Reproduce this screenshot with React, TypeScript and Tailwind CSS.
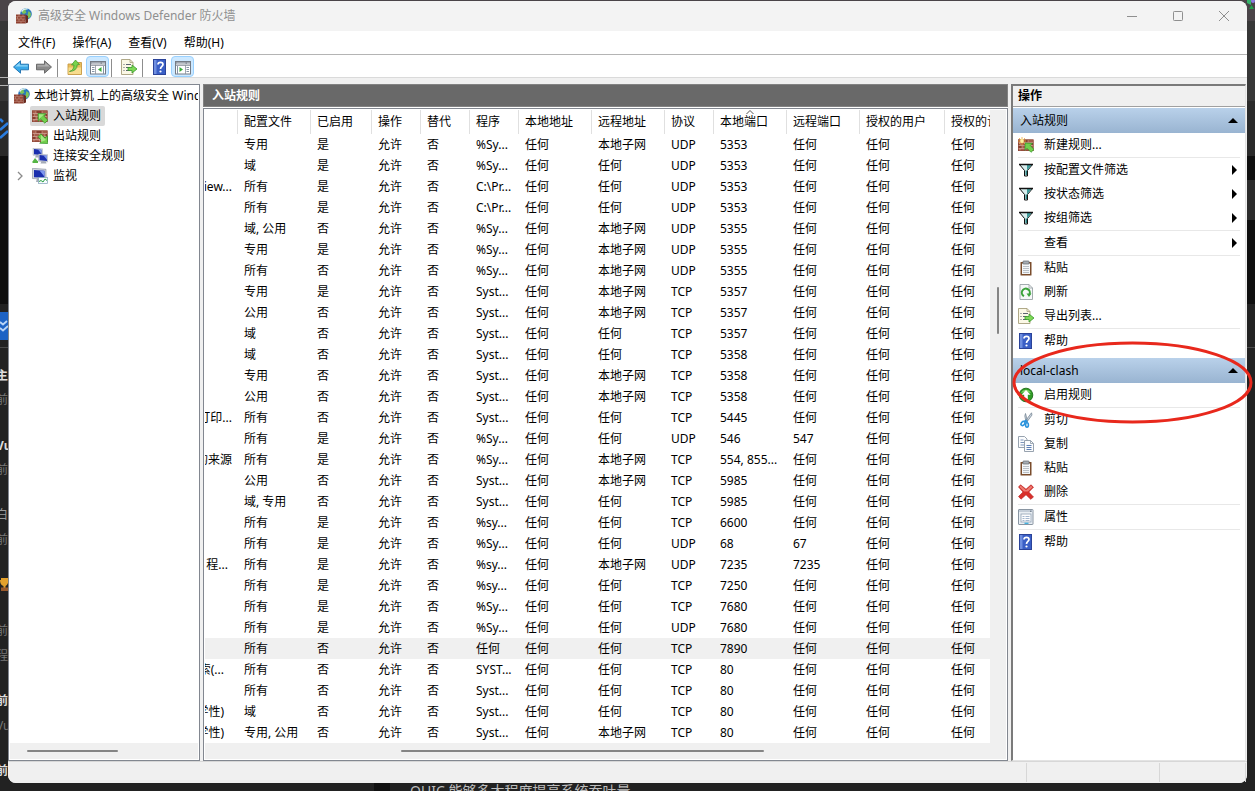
import React from 'react';
import { clsx } from 'clsx';

type IconName =
  | 'firewall'
  | 'inbound'
  | 'outbound'
  | 'connection'
  | 'monitor'
  | 'newRule'
  | 'filter'
  | 'paste'
  | 'refresh'
  | 'export'
  | 'help'
  | 'enable'
  | 'cut'
  | 'copy'
  | 'delete'
  | 'properties'
  | 'back'
  | 'forward'
  | 'folderUp'
  | 'paneLeft'
  | 'paneRight';

const Bricks = () => (
  <>
    <rect x="0" y="2.500" width="15.500" height="11.500" fill="#a85e4c" />
    <path d="M0 5.500h15.500M0 8.500h15.500M0 11.500h15.500M4 2.500v3M10 2.500v3M2 5.500v3M7.500 5.500v3M13 5.500v3M4 8.500v3M10 8.500v3M2 11.500v2.500M7.500 11.500v2.500" stroke="#d9b3a6" strokeWidth="0.600" />
    <path d="M4.500 3h5v2h-5zM0.500 6h1.200v2H.5zM0.500 9h3v2h-3zM13.500 6h1.500v2h-1.500z" fill="#87402f" />
    <rect x="0.300" y="2.800" width="14.900" height="10.900" fill="none" stroke="#8a4435" strokeWidth="0.600" />
  </>
);

const Monitor = ({ x, y }: { x: number; y: number }) => (
  <g transform={`translate(${x} ${y})`}>
    <path d="M3 7h4l1 2.500H2z" fill="#a6acb8" />
    <path d="M0 0l9.500 .8v7L0 7.200z" fill="#d3d8e2" stroke="#9097a8" strokeWidth="0.400" />
    <path d="M1 1l7.500.7v5.200L1 6.300z" fill="#1a2fae" />
    <path d="M5 1.400l3.500.3v4z" fill="#7d98ee" />
  </g>
);

const icons: Record<IconName, React.ReactNode> = {
  firewall: (
    <>
      <circle cx="10" cy="6" r="5.800" fill="#2b78bd" />
      <path d="M6 3c1-1.800 3-2.300 4.500-2.200L9.500 3l1 1.500L8 6 6 5zM12.500 3l2.300 2v3l-2 2.500-1.500-2.500z" fill="#7cc45a" />
      <path d="M5.500 3.500Q8 .2 11.500 1" stroke="#dff1fd" strokeWidth="1.300" fill="none" />
      <path d="M0 6.500h9.500v9H0z" fill="#8f4030" />
      <path d="M0 8.700h9.500M0 11h9.500M0 13.300h9.500M3 6.500v2.200M7 6.500v2.200M5 8.700V11M1.500 8.700V11M3 11v2.300M7 11v2.300M5 13.300v2.200" stroke="#cfa193" strokeWidth="0.500" />
      <path d="M9.500 6.500L12 8v6.500l-2.500 1z" fill="#6b2a1f" />
    </>
  ),
  inbound: (
    <>
      <Bricks />
      <path d="M6 5.500l8 .3-2.200 2.200 4 4.200-3 3-4.200-4.200-2.300 2.200z" fill="#72cf4c" stroke="#2f8f25" strokeWidth="0.700" />
      <path d="M7 6.300l5 .2-5 4.500z" fill="#a5e886" />
    </>
  ),
  outbound: (
    <>
      <Bricks />
      <path d="M15.700 15.500l-8-.3 2.200-2.200-4-4.200 3-3L13 10l2.400-2.200z" fill="#72cf4c" stroke="#2f8f25" strokeWidth="0.700" />
      <path d="M9 7l5 5-5 2z" fill="#a5e886" />
    </>
  ),
  connection: (
    <>
      <Monitor x={1} y={0} />
      <Monitor x={6.500} y={6} />
      <path d="M0.500 13.500l2.500-3.500 3 3.500zM0.500 13h5.500v2H.5z" fill="#55b545" />
    </>
  ),
  monitor: (
    <>
      <path d="M5 10h5l1 4H4z" fill="#a6acb8" />
      <path d="M.500 .3l13.500 1v10L.5 10.500z" fill="#d0d5df" stroke="#858c9a" strokeWidth="0.600" />
      <path d="M2 2l10.500.8v7L2 9.200z" fill="#1a2fae" />
      <path d="M7.500 2.400l5 .4v6z" fill="#7d98ee" />
      <rect x="6.500" y="9.500" width="9" height="6" fill="#f7fbff" stroke="#7ea0b8" strokeWidth="0.700" />
      <path d="M7 13.500l2-1 2 1.500 2-3 2 1.500" stroke="#27a03d" fill="none" />
    </>
  ),
  newRule: (
    <>
      <Bricks />
      <path d="M7 6l7.500.3-2.200 2.200 3.700 4-3 2.800-4-4-2 2z" fill="#72cf4c" stroke="#2f8f25" strokeWidth="0.700" />
      <path d="M4 0v8M0 4h8M1 1l6 6M7 1L1 7" stroke="#f0a838" strokeWidth="0.800" />
      <circle cx="4" cy="4" r="1.900" fill="#fff2a0" />
    </>
  ),
  filter: (
    <>
      <path d="M1.500 2.500h13l-5 6v5.500h-3V8.500z" fill="#d7eeee" stroke="#111" />
      <path d="M9 3h4.500L9 8.500z" fill="#3f9c9c" />
      <path d="M7.500 8.500H9V13H7.500z" fill="#2a8080" />
      <path d="M1 2.500h14" stroke="#111" strokeWidth="1.500" />
    </>
  ),
  paste: (
    <>
      <rect x="2.500" y="2" width="11" height="13.500" rx="0.500" fill="#7a4d2c" />
      <rect x="4" y="3.500" width="8" height="10.500" fill="#f4f6f8" />
      <path d="M5 6.500h6M5 8.500h6M5 10.500h6M5 12.500h6" stroke="#aab2ba" strokeWidth="0.800" />
      <rect x="5" y="1" width="6" height="3" rx="0.500" fill="#a8aeb4" stroke="#5f666c" strokeWidth="0.700" />
    </>
  ),
  refresh: (
    <>
      <path d="M2 .5h9l3.500 3.500v11.500H2z" fill="#f6f8f8" stroke="#99a2a6" strokeWidth="0.900" />
      <path d="M11 .5V4h3.500" fill="none" stroke="#99a2a6" strokeWidth="0.800" />
      <path d="M6 12.200a4 4 0 1 1 5.500-2" fill="none" stroke="#3aa23a" strokeWidth="2" />
      <path d="M8.500 9.500h5l-2.500 3.500z" fill="#3aa23a" />
    </>
  ),
  export: (
    <>
      <path d="M.500 .5h8.500l3 3v12H.5z" fill="#fbf8e6" stroke="#a79f7c" strokeWidth="0.900" />
      <path d="M9 .5v3h3" fill="none" stroke="#a79f7c" strokeWidth="0.800" />
      <path d="M2.500 5.500h1M2.500 8.500h1M2.500 11.500h1M5 5.500h5M5 8.500h4M5 11.500h4" stroke="#5c6270" />
      <path d="M7 8.500h4V6l5 4-5 4v-2.500H7z" fill="#7ed957" stroke="#36982a" strokeWidth="0.800" />
    </>
  ),
  help: (
    <>
      <rect x="1.500" y="0.500" width="12" height="15" fill="#3a5fc6" stroke="#2b4399" />
      <path d="M2 1h2.500v14H2z" fill="#6f8fe0" />
      <path d="M6 5.500C6 2.700 11 2.700 11 5.500C11 7.500 8.500 7.500 8.500 10" fill="none" stroke="#fff" strokeWidth="1.700" />
      <circle cx="8.500" cy="12.500" r="1.100" fill="#fff" />
    </>
  ),
  enable: (
    <>
      <circle cx="8" cy="8" r="6.800" fill="#2f9b25" stroke="#1c6b17" strokeWidth="0.900" />
      <path d="M3 6a5.500 5.500 0 0 1 10 0q-5-2-10 0z" fill="#7ccf62" />
      <path d="M8 3l4.500 4.800H9.800V12H6.200V7.800H3.500z" fill="#fff" />
    </>
  ),
  cut: (
    <>
      <path d="M13.500 .8L7 9.500l1.500 1L14 3zM7.500 1.500L9.500 9l-1.500.8L6.800 4z" fill="#cdd6df" stroke="#6b7c8d" strokeWidth="0.700" />
      <ellipse cx="5" cy="11.500" rx="1.700" ry="2.300" fill="none" stroke="#2a93dc" strokeWidth="1.600" transform="rotate(40 5 11.500)" />
      <ellipse cx="9" cy="13" rx="1.400" ry="2.200" fill="none" stroke="#2a93dc" strokeWidth="1.600" />
      <path d="M6 9.500l2-1 1.500 2" stroke="#2a93dc" strokeWidth="1.500" fill="none" />
    </>
  ),
  copy: (
    <>
      <path d="M.500 .5h6l2.500 2.500v8.500H.5z" fill="#fbfcfd" stroke="#8c98a6" strokeWidth="0.900" />
      <path d="M2.500 4h3M2.500 6.500h4M2.500 9h4" stroke="#7d95bb" />
      <path d="M6.500 4.500h6l3 3v8h-9z" fill="#fbfcfd" stroke="#8c98a6" strokeWidth="0.900" />
      <path d="M12.500 4.500v3h3" fill="none" stroke="#8c98a6" strokeWidth="0.800" />
      <path d="M8.500 9.500h5M8.500 11.500h5M8.500 13.500h5" stroke="#5f80b5" />
    </>
  ),
  delete: (
    <>
      <path d="M2.500 .8L8 5.200l5-4.400 2.500 2.400L10.800 8l4.700 5-2.800 2.300L8 10.800l-5 4.400L.5 12.500 5 8 .5 3z" fill="#d8302b" stroke="#b3201e" strokeWidth="0.600" />
      <path d="M2.500 1.500L8 6.200l5-4.500 1.500 1.500L10 7.500H6L1.500 3z" fill="#ee7d74" />
    </>
  ),
  properties: (
    <>
      <rect x="0.500" y="0.500" width="14.500" height="15" rx="0.500" fill="#e9eef3" stroke="#8995a2" />
      <path d="M1 1h13.500v2H1z" fill="#c3cdd8" />
      <rect x="3" y="5" width="10" height="8" fill="#fdfdfe" stroke="#8fa0b3" strokeWidth="0.800" />
      <path d="M4.500 7.500h2M7.500 7.500h4M4.500 9.500h2M7.500 9.500h4M4.500 11.500h2M7.500 11.500h4" stroke="#8ba3c2" strokeWidth="0.800" />
      <path d="M6.500 14.300h4" stroke="#39aede" strokeWidth="1.300" />
      <path d="M12 2.200h1.500" stroke="#5f6c7a" />
    </>
  ),
  back: (
    <>
      <path d="M.5 8L7.500 1.800v3.400h8v5.600h-8v3.400z" fill="#38a8e8" stroke="#1c6eae" strokeWidth="0.900" />
      <path d="M2.200 7.500L6.700 3.700V6.300h8v1.200z" fill="#8fd6f8" />
    </>
  ),
  forward: (
    <>
      <path d="M15.500 8L8.500 1.800v3.400h-8v5.600h8v3.400z" fill="#8b8b8b" stroke="#626262" strokeWidth="0.900" />
      <path d="M13.800 7.500L9.300 3.700V6.300h-8v1.200z" fill="#b4b4b4" />
    </>
  ),
  folderUp: (
    <>
      <path d="M1 5h5l1-1.500h7.500v12H1z" fill="#e9bd5a" stroke="#c79a44" strokeWidth="0.900" />
      <path d="M1.500 8.500h12.500v6.500H1.500z" fill="#f7dc8e" />
      <path d="M2.500 12.500q4.500-1.500 4.500-6.500H4.500L8.500 1l4 4.500-2.300.3q0 6.200-7.700 6.700z" fill="#79d34d" stroke="#39942a" strokeWidth="0.700" />
    </>
  ),
  paneLeft: (
    <>
      <rect x="0.500" y="2.500" width="15" height="12.500" fill="#fff" stroke="#747b85" />
      <path d="M1 3h14v2.500H1z" fill="#8c939d" />
      <path d="M1.500 4.200h9M12 4.200h3" stroke="#e8ebef" strokeWidth="0.800" />
      <path d="M5.500 6v9M1 6.500h14" stroke="#8a919b" strokeWidth="0.800" />
      <path d="M2 8.500h2.500M2 10.500h2.500M2 12.500h2.500M13.500 7v8" stroke="#8794a5" />
      <path d="M11.500 8v5l-3.500-2.500z" fill="#38ad39" />
    </>
  ),
  paneRight: (
    <>
      <rect x="0.500" y="2.500" width="15" height="12.500" fill="#fff" stroke="#747b85" />
      <path d="M1 3h14v2.500H1z" fill="#8c939d" />
      <path d="M1.500 4.200h9M12 4.200h3" stroke="#e8ebef" strokeWidth="0.800" />
      <path d="M10.500 6v9M1 6.500h14" stroke="#8a919b" strokeWidth="0.800" />
      <path d="M11.500 8.500H14M11.500 10.500H14M11.500 12.500H14M2.500 7v8" stroke="#8794a5" />
      <path d="M4.500 8v5l3.500-2.500z" fill="#38ad39" />
    </>
  ),
};

const Icon = ({ name }: { name: IconName }) => (
  <svg viewBox="0 0 16 16" className="size-4 shrink-0" aria-hidden="true">
    {icons[name]}
  </svg>
);

const menus = ['文件(F)', '操作(A)', '查看(V)', '帮助(H)'];

interface Column {
  label: string;
  width: string;
  sorted?: boolean;
}

const columns: Column[] = [
  { label: '', width: 'w-[33px]' },
  { label: '配置文件', width: 'w-[73px]' },
  { label: '已启用', width: 'w-[61px]' },
  { label: '操作', width: 'w-[49px]' },
  { label: '替代', width: 'w-[49px]' },
  { label: '程序', width: 'w-[49px]' },
  { label: '本地地址', width: 'w-[73px]' },
  { label: '远程地址', width: 'w-[73px]' },
  { label: '协议', width: 'w-[49px]' },
  { label: '本地端口', width: 'w-[73px]', sorted: true },
  { label: '远程端口', width: 'w-[73px]' },
  { label: '授权的用户', width: 'w-[85px]' },
  { label: '授权的计', width: 'w-auto' },
];

// group tail, profile, enabled, program, remote address, protocol, local port, remote port
type Rule = [string, string, string, string, string, string, string, string];

const rules: Rule[] = [
  ['', '专用', '是', '%Sy...', '本地子网', 'UDP', '5353', '任何'],
  ['', '域', '是', '%Sy...', '任何', 'UDP', '5353', '任何'],
  ['iew...', '所有', '是', 'C:\\Pr...', '任何', 'UDP', '5353', '任何'],
  ['', '所有', '是', 'C:\\Pr...', '任何', 'UDP', '5353', '任何'],
  ['', '域, 公用', '否', '%Sy...', '本地子网', 'UDP', '5355', '任何'],
  ['', '专用', '是', '%Sy...', '本地子网', 'UDP', '5355', '任何'],
  ['', '所有', '否', '%Sy...', '本地子网', 'UDP', '5355', '任何'],
  ['', '专用', '是', 'Syst...', '本地子网', 'TCP', '5357', '任何'],
  ['', '公用', '否', 'Syst...', '本地子网', 'TCP', '5357', '任何'],
  ['', '域', '否', 'Syst...', '任何', 'TCP', '5357', '任何'],
  ['', '域', '否', 'Syst...', '任何', 'TCP', '5358', '任何'],
  ['', '专用', '否', 'Syst...', '本地子网', 'TCP', '5358', '任何'],
  ['', '公用', '否', 'Syst...', '本地子网', 'TCP', '5358', '任何'],
  ['打印...', '所有', '否', 'Syst...', '任何', 'TCP', '5445', '任何'],
  ['', '所有', '是', '%Sy...', '任何', 'UDP', '546', '547'],
  ['的来源', '所有', '是', '%Sy...', '本地子网', 'TCP', '554, 855...', '任何'],
  ['', '公用', '否', 'Syst...', '本地子网', 'TCP', '5985', '任何'],
  ['', '域, 专用', '否', 'Syst...', '任何', 'TCP', '5985', '任何'],
  ['', '所有', '是', '%sy...', '任何', 'TCP', '6600', '任何'],
  ['', '所有', '是', '%Sy...', '任何', 'UDP', '68', '67'],
  ['程...', '所有', '是', '%sy...', '本地子网', 'UDP', '7235', '7235'],
  ['', '所有', '是', '%sy...', '任何', 'TCP', '7250', '任何'],
  ['', '所有', '是', '%Sy...', '任何', 'TCP', '7680', '任何'],
  ['', '所有', '是', '%Sy...', '任何', 'UDP', '7680', '任何'],
  ['', '所有', '否', '任何', '任何', 'TCP', '7890', '任何'],
  ['索(...', '所有', '否', 'SYST...', '任何', 'TCP', '80', '任何'],
  ['', '所有', '否', 'Syst...', '任何', 'TCP', '80', '任何'],
  ['学性)', '域', '否', 'Syst...', '任何', 'TCP', '80', '任何'],
  ['学性)', '专用, 公用', '否', 'Syst...', '本地子网', 'TCP', '80', '任何'],
];

const SELECTED_PORT = '7890';

// the group column is scrolled half out of view, so only the tail of its text shows
const groupPadding: Record<string, string> = {
  '程...': 'pr-2.5',
  '索(...': 'pr-3.5',
  '学性)': 'pr-3.5',
};

interface ActionItem {
  label: string;
  icon?: IconName;
  submenu?: boolean;
}

// every inner array is one group, groups are divided by a thin line
const inboundActions: ActionItem[][] = [
  [{ label: '新建规则...', icon: 'newRule' }],
  [
    { label: '按配置文件筛选', icon: 'filter', submenu: true },
    { label: '按状态筛选', icon: 'filter', submenu: true },
    { label: '按组筛选', icon: 'filter', submenu: true },
  ],
  [{ label: '查看', submenu: true }],
  [
    { label: '粘贴', icon: 'paste' },
    { label: '刷新', icon: 'refresh' },
    { label: '导出列表...', icon: 'export' },
  ],
  [{ label: '帮助', icon: 'help' }],
];

const ruleActions: ActionItem[][] = [
  [{ label: '启用规则', icon: 'enable' }],
  [
    { label: '剪切', icon: 'cut' },
    { label: '复制', icon: 'copy' },
    { label: '粘贴', icon: 'paste' },
    { label: '删除', icon: 'delete' },
  ],
  [{ label: '属性', icon: 'properties' }],
  [{ label: '帮助', icon: 'help' }],
];

const TitleBar = () => (
  <header className="flex h-[30px] shrink-0 items-center rounded-t-lg bg-[#f3f3f3] pl-2 text-[#8f8f8f]">
    <Icon name="firewall" />
    <h1 className="ml-1.5 flex-1 truncate">高级安全 Windows Defender 防火墙</h1>
    <button type="button" aria-label="最小化" className="flex h-full w-[46px] items-center justify-center">
      <svg viewBox="0 0 10 10" className="size-2.5">
        <path d="M0 5.500h10" stroke="#8f8f8f" />
      </svg>
    </button>
    <button type="button" aria-label="最大化" className="flex h-full w-[46px] items-center justify-center">
      <svg viewBox="0 0 10 10" className="size-2.5">
        <rect x="0.500" y="0.500" width="9" height="9" rx="0.800" fill="none" stroke="#8f8f8f" />
      </svg>
    </button>
    <button type="button" aria-label="关闭" className="flex h-full w-[46px] items-center justify-center">
      <svg viewBox="0 0 10 10" className="size-2.5">
        <path d="M0 0l10 10M10 0L0 10" stroke="#8f8f8f" />
      </svg>
    </button>
  </header>
);

const ToolButton = ({ icon, label, active }: { icon: IconName; label: string; active?: boolean }) => (
  <button
    type="button"
    aria-label={label}
    className={clsx(
      'flex h-[21px] w-[23px] items-center justify-center',
      active && 'rounded-sm border border-[#99d1ff] bg-[#cce8ff]',
    )}
  >
    <Icon name={icon} />
  </button>
);

const ToolDivider = () => <span className="mr-[5px] ml-0.5 h-[18px] w-px bg-[#8d8d8d]" />;

const Toolbar = () => (
  <div className="flex h-[23px] shrink-0 items-end border-b border-[#dadada] bg-white pl-px">
    <ToolButton icon="back" label="后退" />
    <ToolButton icon="forward" label="前进" />
    <ToolDivider />
    <ToolButton icon="folderUp" label="上一级" />
    <ToolButton icon="paneLeft" label="显示/隐藏控制台树" active />
    <ToolDivider />
    <ToolButton icon="export" label="导出列表" />
    <ToolDivider />
    <ToolButton icon="help" label="帮助" />
    <ToolButton icon="paneRight" label="显示/隐藏操作窗格" active />
  </div>
);

interface TreeItemProps {
  icon: IconName;
  label: string;
  selected?: boolean;
  expandable?: boolean;
}

const TreeItem: React.FC<TreeItemProps> = ({ icon, label, selected, expandable }) => (
  <li className="flex h-5 items-center">
    <span className="flex w-5 shrink-0 justify-center">
      {expandable && (
        <svg viewBox="0 0 6 10" className="h-2.5 w-1.5">
          <path d="M1 1l4 4-4 4" fill="none" stroke="#8b8b8b" strokeWidth="1.300" />
        </svg>
      )}
    </span>
    <button
      type="button"
      className={clsx('flex h-5 items-center gap-[5px] rounded-xs pr-1 pl-0.5', selected && 'bg-[#d9d9d9]')}
    >
      <Icon name={icon} />
      {label}
    </button>
  </li>
);

const TreePane = () => (
  <nav className="flex w-48 shrink-0 flex-col border border-[#828790] bg-white p-px">
    <div className="flex-1 overflow-hidden whitespace-nowrap">
      <button type="button" className="flex h-5 items-center gap-1 pl-1">
        <Icon name="firewall" />
        本地计算机 上的高级安全 Wind
      </button>
      <ul>
        <TreeItem icon="inbound" label="入站规则" selected />
        <TreeItem icon="outbound" label="出站规则" />
        <TreeItem icon="connection" label="连接安全规则" />
        <TreeItem icon="monitor" label="监视" expandable />
      </ul>
    </div>
    <div className="flex h-4 items-center bg-[#f0f0f0] pl-[17px]">
      <span className="h-0.5 w-[91px] rounded-full bg-[#858585]" />
    </div>
  </nav>
);

const cellClass = 'overflow-hidden px-1.5 whitespace-nowrap';

const RuleTable = () => (
  <table className="w-full table-fixed border-separate border-spacing-0 text-left">
    <thead>
      <tr className="h-6">
        {columns.map((column, index) => (
          <th
            key={index}
            scope="col"
            className={clsx(
              column.width,
              'relative overflow-hidden pl-1.5 font-normal whitespace-nowrap',
              index < columns.length - 1 && 'border-r border-[#e0e0e0]',
            )}
          >
            {column.label}
            {column.sorted && (
              <svg viewBox="0 0 8 4" className="absolute top-0 left-1/2 h-1 w-2 -translate-x-1/2">
                <path d="M.500 4L4 .5 7.500 4" fill="none" stroke="#555" />
              </svg>
            )}
          </th>
        ))}
      </tr>
    </thead>
    <tbody>
      {rules.map(([group, profile, enabled, program, remote, protocol, localPort, remotePort], index) => (
        <tr key={index} className={clsx('h-[21px]', localPort === SELECTED_PORT && 'bg-[#f0f0f0]')}>
          <td className="overflow-hidden whitespace-nowrap">
            <div className={clsx('flex justify-end', groupPadding[group] ?? 'pr-1.5')}>{group}</div>
          </td>
          <td className={cellClass}>{profile}</td>
          <td className={cellClass}>{enabled}</td>
          <td className={cellClass}>允许</td>
          <td className={cellClass}>否</td>
          <td className="pl-1.5 whitespace-nowrap">{program}</td>
          <td className={cellClass}>任何</td>
          <td className={cellClass}>{remote}</td>
          <td className={cellClass}>{protocol}</td>
          <td className={cellClass}>{localPort}</td>
          <td className={cellClass}>{remotePort}</td>
          <td className={cellClass}>任何</td>
          <td className={cellClass}>任何</td>
        </tr>
      ))}
    </tbody>
  </table>
);

const RulesPane = () => (
  <section className="flex min-w-0 flex-1 flex-col gap-px bg-white">
    <h2 className="flex h-[23px] shrink-0 items-center border border-[#828282] bg-[#696969] pl-2 font-bold text-white">
      入站规则
    </h2>
    <div className="flex min-h-0 flex-1 flex-col border border-[#828790] p-px">
      <div className="flex min-h-0 flex-1">
        <div className="min-w-0 flex-1 overflow-hidden">
          <RuleTable />
        </div>
        <div className="flex w-4 flex-col items-center bg-[#f0f0f0] pt-[177px]">
          <span className="h-[47px] w-0.5 rounded-full bg-[#858585]" />
        </div>
      </div>
      <div className="flex h-4 shrink-0 items-center bg-[#f0f0f0] pl-[196px]">
        <span className="h-0.5 w-[363px] rounded-full bg-[#858585]" />
      </div>
    </div>
  </section>
);

const ActionSection = ({ title, groups }: { title: string; groups: ActionItem[][] }) => (
  <section>
    <button
      type="button"
      className="flex h-[25px] w-full items-center justify-between bg-linear-to-b from-[#b9d1ea] to-[#99b4d1] px-[7px]"
    >
      {title}
      <svg viewBox="0 0 10 5" className="h-[5px] w-2.5">
        <path d="M0 5l5-5 5 5z" />
      </svg>
    </button>
    <div className="divide-y divide-[#e8e8e8] px-[5px]">
      {groups.map((group, index) => (
        <ul key={index}>
          {group.map((item) => (
            <li key={item.label}>
              <button type="button" className="flex h-6 w-full items-center gap-2.5 pr-[3px] text-left">
                {item.icon ? <Icon name={item.icon} /> : <span className="w-4" />}
                <span className="flex-1">{item.label}</span>
                {item.submenu && (
                  <svg viewBox="0 0 5 10" className="h-2.5 w-[5px]">
                    <path d="M0 0l5 5-5 5z" />
                  </svg>
                )}
              </button>
            </li>
          ))}
        </ul>
      ))}
    </div>
  </section>
);

const ActionsPane = () => (
  <aside className="w-[235px] shrink-0 border-t-2 border-r border-b border-l-2 border-t-[#7a7a7a] border-r-[#e3e3e3] border-b-[#e3e3e3] border-l-[#7a7a7a] bg-white">
    <h2 className="mb-px flex h-[21px] items-center border-b border-[#a0a0a0] bg-[#f0f0f0] pl-[5px] font-bold">操作</h2>
    <div className="flex flex-col gap-[5px]">
      <ActionSection title="入站规则" groups={inboundActions} />
      <ActionSection title="local-clash" groups={ruleActions} />
    </div>
  </aside>
);

const StatusBar = () => (
  <footer className="flex h-[22px] shrink-0 justify-end rounded-b-lg border-t border-[#d7d7d7] bg-[#f0f0f0] pt-px pr-px pb-px">
    <span className="w-[133px] border-l border-[#d7d7d7]" />
    <span className="w-[87px] border-x border-[#d7d7d7]" />
  </footer>
);

// strips of the dark page that stay visible around the window
const edgeTexts = [
  { text: '主', className: 'top-[367px] font-bold text-[#dddddd]' },
  { text: '前', className: 'top-[391px] text-[#777777]' },
  { text: 'Vu', className: 'top-[437px] font-bold text-[#dddddd]' },
  { text: '前', className: 'top-[461px] text-[#777777]' },
  { text: '白', className: 'top-[506px] text-[#999999]' },
  { text: '前', className: 'top-[531px] text-[#777777]' },
  { text: '前', className: 'top-[622px] text-[#777777]' },
  { text: '程', className: 'top-[647px] text-[#777777]' },
  { text: '前', className: 'top-[692px] font-bold text-[#dddddd]' },
  { text: 'Vu', className: 'top-[717px] text-[#777777]' },
  { text: '前', className: 'top-[762px] font-bold text-[#dddddd]' },
];

const Backdrop = () => (
  <div className="absolute inset-0" aria-hidden="true">
    <div className="absolute inset-x-0 top-0 h-[21px] bg-[#4a4448]" />
    <div className="absolute inset-x-0 top-[21px] h-20 bg-[#373737]" />
    <div className="absolute inset-x-0 top-[101px] h-[55px] bg-[#2a2a2a]" />
    <div className="absolute inset-x-0 top-[156px] h-[148px] bg-[#0f0f0f]" />
    <div className="absolute top-[180px] right-0 h-10 w-2 bg-[#2b2b2b]" />
    <div className="absolute inset-x-0 top-[347px] h-px bg-[#4a4a4a]" />
    <div className="absolute top-[77px] left-0 h-[9px] w-2 border-y border-[#b5b5b5]" />
    <svg viewBox="0 0 8 24" className="absolute top-[116px] left-0 h-6 w-2">
      <path d="M0 3l3 3M0 14l8-7M0 22l8-7" stroke="#2a7de0" strokeWidth="2.500" />
    </svg>
    <svg viewBox="0 0 8 28" className="absolute top-[312px] left-0 h-7 w-2">
      <rect width="8" height="28" fill="#1d62c4" />
      <path d="M0 10l3 2.500 4-3.500M0 16l3 2.500 5-4.500" fill="none" stroke="#b9d4f7" strokeWidth="1.800" />
    </svg>
    <svg viewBox="0 0 8 14" className="absolute top-[577px] left-0 h-3.5 w-2">
      <path d="M1 1h7v5q-1 2.500-2.500 3v2h-2V9Q0 8 0 3h1z" fill="#e3a12c" />
      <path d="M1 10.500h7v3.500H1z" fill="#9a5a2c" />
    </svg>
    <svg viewBox="0 0 8 10" className="absolute top-0 right-0 h-2.5 w-2">
      <path d="M0 0h4v5L0 3z" fill="#35b56a" />
      <circle cx="6" cy="1" r="2" fill="#8b7be0" />
      <path d="M2 9l2.500-4L7 9z" fill="#1fa04a" />
    </svg>
    {edgeTexts.map(({ text, className }) => (
      <span key={className} className={clsx('absolute -left-1 leading-[18px]', className)}>
        {text}
      </span>
    ))}
    <div className="absolute bottom-0 left-[374px] h-2 w-4 bg-[#111111]" />
    <p className="absolute top-[782px] left-[410px] text-sm leading-[18px] whitespace-nowrap text-[#bdbdbd]">
      QUIC 能够多大程度提高系统吞吐量
    </p>
  </div>
);

export default function App() {
  return (
    <div className="relative flex h-screen flex-col overflow-hidden bg-[#222222] px-2 pt-px pb-2 font-['Noto_Sans','Noto_Sans_CJK_SC',sans-serif] text-xs text-black">
      <Backdrop />
      <div className="relative flex min-h-0 flex-1 flex-col rounded-lg bg-[#f0f0f0]">
        <TitleBar />
        <div className="flex h-6 shrink-0 items-center gap-[17px] border-b border-[#b4b4b4] bg-white pl-2.5">
          {menus.map((menu) => (
            <button key={menu} type="button">
              {menu}
            </button>
          ))}
        </div>
        <Toolbar />
        <main className="flex min-h-0 flex-1 gap-[3px] pt-1.5 pr-px">
          <TreePane />
          <RulesPane />
          <ActionsPane />
        </main>
        <StatusBar />
      </div>
      <svg
        viewBox="0 0 242 84"
        className="pointer-events-none absolute top-[341px] right-px h-[84px] w-[242px]"
        aria-hidden="true"
      >
        <ellipse cx="120.500" cy="41.500" rx="118.500" ry="39.500" fill="none" stroke="#e8281c" strokeWidth="3" />
      </svg>
    </div>
  );
}
